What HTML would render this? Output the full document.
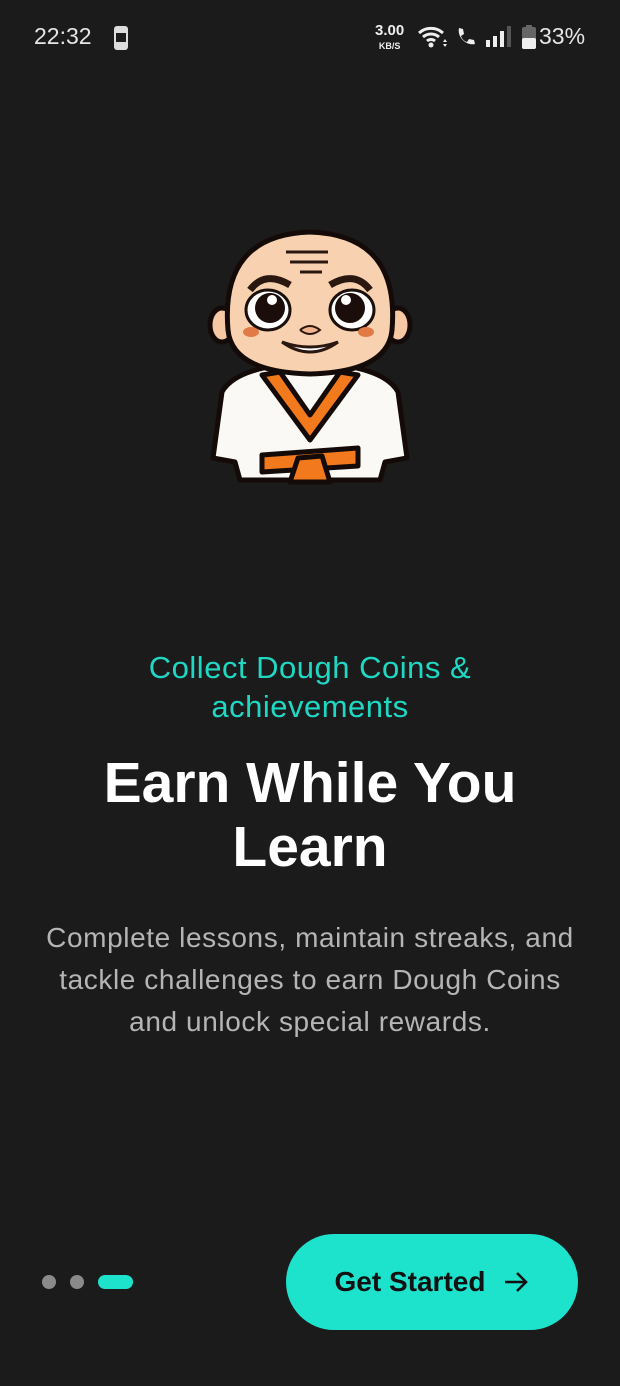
<!DOCTYPE html>
<html><head><meta charset="utf-8"><style>
body{margin:0;background:#1b1b1b;width:620px;height:1386px;overflow:hidden;font-family:"Liberation Sans",sans-serif;position:relative}
.abs{position:absolute}
.sb{color:#e6e6e6;font-size:23px;top:23px}
.sub{top:648px;width:620px;text-align:center;color:#1fd8c4;font-size:31px;letter-spacing:0.5px;line-height:39px}
.h1{top:751px;width:620px;text-align:center;color:#fff;font-size:57px;font-weight:bold;line-height:64px}
.p{top:917px;width:620px;text-align:center;color:#b5b5b5;font-size:28px;letter-spacing:0.6px;line-height:42px}
.btn{left:286px;top:1234px;width:292px;height:96px;border-radius:48px;background:#1de2cc;color:#111;font-weight:bold;font-size:28px;display:flex;align-items:center;justify-content:center;gap:18px}
</style></head><body>
<div class="abs sb" style="left:34px">22:32</div>
<svg class="abs" style="left:111px;top:26px" width="20" height="24" viewBox="0 0 20 24"><rect x="3" y="0" width="14" height="24" rx="3" fill="#ddd"/><rect x="5" y="7" width="10" height="9" fill="#1b1b1b"/></svg>
<div class="abs" style="left:375px;top:24px;color:#eee;font-size:15px;font-weight:bold;line-height:14px;text-align:center">3.00<br><span style="font-size:9px">KB/S</span></div>
<svg class="abs" style="left:417px;top:25px" width="32" height="24" viewBox="0 0 32 24"><path d="M2 8a18 18 0 0 1 24 0M6 12a12 12 0 0 1 16 0M10 16a6 6 0 0 1 8 0" stroke="#eee" stroke-width="3" fill="none"/><circle cx="14" cy="20" r="2.5" fill="#eee"/><path d="M28 14l2 3h-4zM28 22l2-3h-4z" fill="#eee"/></svg>
<svg class="abs" style="left:455px;top:26px" width="22" height="22" viewBox="0 0 22 22"><path d="M4 2l4 1 1 5-3 2c1 3 3 5 6 6l2-3 5 1 1 4c-9 2-18-7-16-16z" fill="#eee"/></svg>
<svg class="abs" style="left:485px;top:26px" width="30" height="22" viewBox="0 0 30 22"><rect x="1" y="14" width="4" height="7" fill="#eee"/><rect x="8" y="10" width="4" height="11" fill="#eee"/><rect x="15" y="5" width="4" height="16" fill="#eee"/><rect x="22" y="0" width="4" height="21" fill="#555"/></svg>
<svg class="abs" style="left:522px;top:25px" width="14" height="24" viewBox="0 0 14 24"><rect x="0" y="2" width="14" height="22" rx="2" fill="#666"/><rect x="4" y="0" width="6" height="3" fill="#666"/><rect x="0" y="13" width="14" height="11" rx="2" fill="#eee"/></svg>
<div class="abs sb" style="left:539px">33%</div>

<svg class="abs" style="left:200px;top:220px" width="220" height="270" viewBox="200 220 220 270">
<g stroke="#140b08" stroke-width="5" stroke-linejoin="round">
<path d="M213 458 L222 392 Q236 366 310 362 Q384 366 398 392 L407 458 L385 462 L380 480 L240 480 L235 462 Z" fill="#fbf9f6"/>
<path d="M262 375 L310 440 L358 375 L340 372 L310 415 L280 372 Z" fill="#f27a1c"/>
<path d="M262 455 L358 448 L358 466 L262 472 Z" fill="#f27a1c"/>
<path d="M298 458 L290 482 L330 482 L322 456 Z" fill="#f27a1c"/>
<ellipse cx="222" cy="325" rx="12" ry="17" fill="#f6c8a4"/>
<ellipse cx="398" cy="325" rx="12" ry="17" fill="#f6c8a4"/>
<path d="M228 330 Q220 235 310 232 Q400 235 392 330 Q388 372 310 374 Q232 372 228 330 Z" fill="#f8d2b0"/>
</g>
<path d="M286 252h42M290 262h38M300 272h22" stroke="#2a1710" stroke-width="3"/>
<path d="M250 290 Q265 270 290 285" stroke="#2a1710" stroke-width="7" fill="none"/>
<path d="M330 285 Q355 270 370 290" stroke="#2a1710" stroke-width="7" fill="none"/>
<ellipse cx="268" cy="310" rx="22" ry="20" fill="#fff" stroke="#1b0f0b" stroke-width="3"/>
<ellipse cx="352" cy="310" rx="22" ry="20" fill="#fff" stroke="#1b0f0b" stroke-width="3"/>
<circle cx="270" cy="308" r="15" fill="#1a0d0a"/><circle cx="350" cy="308" r="15" fill="#1a0d0a"/>
<circle cx="272" cy="300" r="5" fill="#fff"/><circle cx="346" cy="300" r="5" fill="#fff"/>
<ellipse cx="251" cy="332" rx="8" ry="5" fill="#e27a45"/><ellipse cx="366" cy="332" rx="8" ry="5" fill="#e27a45"/>
<path d="M300 330 Q310 322 320 330 Q310 338 300 330" fill="#f2b48c" stroke="#2a1710" stroke-width="2"/>
<path d="M282 342 Q310 362 338 342 Q310 352 282 342 Z" fill="#fff" stroke="#2a1710" stroke-width="3"/>
</svg>

<div class="abs sub">Collect Dough Coins &amp;<br>achievements</div>
<div class="abs h1">Earn While You<br>Learn</div>
<div class="abs p">Complete lessons, maintain streaks, and<br>tackle challenges to earn Dough Coins<br>and unlock special rewards.</div>

<div class="abs" style="left:42px;top:1275px;width:14px;height:14px;border-radius:7px;background:#8a8a8a"></div>
<div class="abs" style="left:70px;top:1275px;width:14px;height:14px;border-radius:7px;background:#8a8a8a"></div>
<div class="abs" style="left:98px;top:1275px;width:35px;height:14px;border-radius:7px;background:#1de2cc"></div>
<div class="abs btn"><span>Get Started</span><svg width="26" height="22" viewBox="0 0 26 22"><path d="M2 11h21M14 2l9 9-9 9" stroke="#111" stroke-width="2.6" fill="none"/></svg></div>
</body></html>
